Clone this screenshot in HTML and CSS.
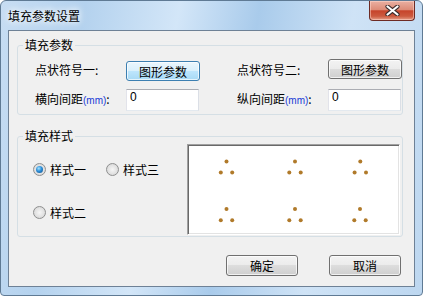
FILE: index.html
```html
<!DOCTYPE html>
<html lang="zh-CN">
<head>
    <meta charset="UTF-8">
    <meta name="viewport" content="width=device-width, initial-scale=1.0">
    <title>填充参数设置</title>
    <link rel="stylesheet" href="styles.css">
</head>
<body>
    <div class="window">
        <div class="titlebar">
            <span class="title">填充参数设置</span>
            <button class="close-btn" aria-label="关闭">
                <svg width="15" height="11" viewBox="0 0 15 11">
                    <path d="M2.5 1.5 L12.5 9.5 M12.5 1.5 L2.5 9.5" stroke="#3a2a2a" stroke-width="4.2" stroke-linecap="round"/>
                    <path d="M2.5 1.5 L12.5 9.5 M12.5 1.5 L2.5 9.5" stroke="#fff" stroke-width="2.2" stroke-linecap="round"/>
                </svg>
            </button>
        </div>

        <div class="client">
            <fieldset class="group group-params">
                <legend>填充参数</legend>
                <div class="params-grid">
                    <span class="label">点状符号一:</span>
                    <button class="btn btn-focus btn-low">图形参数</button>
                    <span class="label">点状符号二:</span>
                    <button class="btn btn-high">图形参数</button>
                    <span class="label">横向间距<span class="unit">(mm)</span>:</span>
                    <input class="textbox" type="text" value="0">
                    <span class="label">纵向间距<span class="unit">(mm)</span>:</span>
                    <input class="textbox" type="text" value="0">
                </div>
            </fieldset>

            <fieldset class="group group-style">
                <legend>填充样式</legend>
                <div class="style-body">
                    <div class="radios">
                        <label class="radio checked"><span class="radio-dot"></span>样式一</label>
                        <label class="radio"><span class="radio-dot"></span>样式三</label>
                        <label class="radio"><span class="radio-dot"></span>样式二</label>
                    </div>
                    <div class="preview">
                        <svg width="209" height="87" viewBox="0 0 209 87">
                            <g fill="#b07a2a">
                                <circle cx="37.5" cy="15.5" r="2"/><circle cx="31.8" cy="26.5" r="2"/><circle cx="43.2" cy="26.5" r="2"/>
                                <circle cx="106" cy="15.5" r="2"/><circle cx="100.3" cy="26.5" r="2"/><circle cx="111.7" cy="26.5" r="2"/>
                                <circle cx="171.3" cy="15.5" r="2"/><circle cx="165.6" cy="26.5" r="2"/><circle cx="177" cy="26.5" r="2"/>
                                <circle cx="37.5" cy="63" r="2"/><circle cx="31.8" cy="74.3" r="2"/><circle cx="43.2" cy="74.3" r="2"/>
                                <circle cx="106" cy="63" r="2"/><circle cx="100.3" cy="74.3" r="2"/><circle cx="111.7" cy="74.3" r="2"/>
                                <circle cx="171" cy="63" r="2"/><circle cx="165.3" cy="74.3" r="2"/><circle cx="176.7" cy="74.3" r="2"/>
                            </g>
                        </svg>
                    </div>
                </div>
            </fieldset>

            <div class="actions">
                <button class="btn btn-wide">确定</button>
                <button class="btn btn-wide">取消</button>
            </div>
        </div>
    </div>
</body>
</html>
```

FILE: styles.css
```css
body {
    margin: 0;
    font-family: "Noto Sans CJK SC", sans-serif;
    font-size: 12px;
    color: #000;
    background: #fff;
}

.window {
    box-sizing: border-box;
    width: 423px;
    height: 296px;
    display: flex;
    flex-direction: column;
    padding: 0 7px 8px 7px;
    border: 1px solid #5f7a94;
    border-radius: 6px 6px 4px 4px;
    background: linear-gradient(100deg, #c7ddf3 0%, #b4d2ee 18%, #d3e6f8 38%, #a9cbeb 55%, #cfe3f6 75%, #bdd7f0 100%);
}

.titlebar {
    height: 29px;
    display: flex;
    align-items: flex-start;
}

.title {
    align-self: center;
    line-height: 16px;
    text-shadow: 0 0 6px #fff, 0 0 10px #fff;
}

.close-btn {
    margin-left: auto;
    width: 46px;
    height: 20px;
    padding: 0;
    display: flex;
    align-items: center;
    justify-content: center;
    border: 1px solid #6d2b24;
    border-top: none;
    border-radius: 0 0 4px 4px;
    background: linear-gradient(#eab0a2 0%, #dd8c78 45%, #c6442b 52%, #cc5a3f 80%, #e59e88 100%);
    box-shadow: inset 0 0 0 1px rgba(255, 220, 210, 0.5);
}

.client {
    flex: 1;
    display: flex;
    flex-direction: column;
    border: 1px solid #6e8196;
    background: #f0f0f0;
}

.group {
    margin: 0 11px 0 8px;
    padding: 0;
    border: 1px solid #d5dfe5;
    border-radius: 3px;
    min-inline-size: 0;
}

.group legend {
    margin-left: 5px;
    padding: 0 2px;
    line-height: 16px;
}

.group-params {
    margin-top: 6px;
}

.group-style {
    margin-top: 13px;
}

.params-grid {
    display: grid;
    grid-template-columns: 91px 111px 91px 73px;
    grid-template-rows: 22px 22px;
    row-gap: 8px;
    align-items: center;
    padding: 6px 0 3px 17px;
}

.label {
    white-space: nowrap;
    line-height: 16px;
}

.unit {
    font-family: "Liberation Sans", sans-serif;
    font-size: 10px;
    color: #1a3bd6;
}

.btn {
    box-sizing: border-box;
    width: 74px;
    height: 20px;
    padding: 0;
    font-family: inherit;
    font-size: 12px;
    color: #000;
    border: 1px solid #707070;
    border-radius: 3px;
    background: linear-gradient(#f3f3f3 0%, #ebebeb 50%, #dddddd 50%, #cfcfcf 100%);
    box-shadow: inset 0 0 0 1px rgba(255, 255, 255, 0.7);
}

.btn-focus {
    border-color: #3c7fb1;
    background: linear-gradient(#eaf6fd 0%, #d9f0fc 50%, #bee6fd 50%, #a7d9f5 100%);
}

.btn-low {
    align-self: end;
}

.btn-high {
    align-self: start;
}

.textbox {
    box-sizing: border-box;
    width: 73px;
    height: 22px;
    padding: 0 3px 6px 3px;
    font-family: "Liberation Sans", sans-serif;
    font-size: 12px;
    border: 1px solid;
    border-color: #abadb3 #dbdfe6 #e3e9ef #e2e3ea;
    background: #fff;
    outline: none;
}

.style-body {
    display: flex;
    padding-bottom: 1px;
}

.radios {
    flex: none;
    width: 154px;
    margin: 17px 0 0 15px;
    display: grid;
    grid-template-columns: 73px auto;
    grid-template-rows: 16px 16px;
    row-gap: 27px;
    align-content: start;
}

.radio {
    display: flex;
    align-items: center;
    gap: 4px;
    white-space: nowrap;
}

.radio-dot {
    box-sizing: border-box;
    width: 13px;
    height: 13px;
    display: grid;
    place-items: center;
    border: 1px solid #8e8f8f;
    border-radius: 50%;
    background: radial-gradient(circle at 50% 50%, #f6f6f6 0, #e2e2e2 55%, #cfcfcf 100%);
}

.radio.checked .radio-dot::after {
    content: "";
    width: 7px;
    height: 7px;
    border-radius: 50%;
    background: radial-gradient(circle at 40% 35%, #a6e4ff 0, #2c8ed8 45%, #0c4a86 100%);
}

.preview {
    box-sizing: border-box;
    width: 213px;
    height: 91px;
    border: 1px solid;
    border-color: #a0a0a0 #fff #fff #a0a0a0;
    box-shadow: inset 1px 1px 0 #696969, inset -1px -1px 0 #e3e3e3;
    background: #fff;
    padding: 1px;
}

.preview svg {
    display: block;
}

.actions {
    display: flex;
    justify-content: flex-end;
    gap: 31px;
    margin-top: 18px;
    padding-right: 13px;
}

.btn-wide {
    width: 72px;
    height: 21px;
}
```
